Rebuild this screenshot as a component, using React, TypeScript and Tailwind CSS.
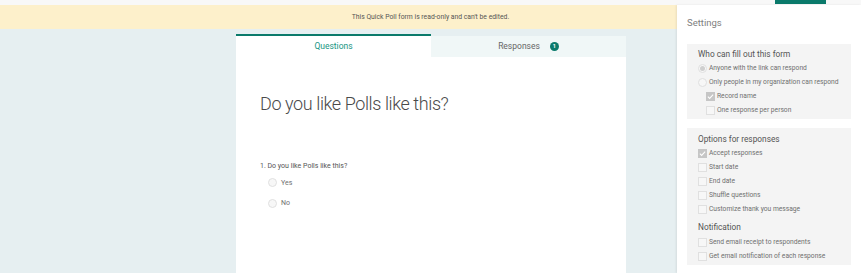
import React from "react";

const font = { fontFamily: 'Roboto, "Open Sans", sans-serif' };

function Check({ checked }: { checked?: boolean }) {
  return (
    <span
      className={
        "inline-flex h-[9px] w-[9px] shrink-0 items-center justify-center border " +
        (checked ? "border-[#c6c6c6] bg-[#c6c6c6]" : "border-[#e0e0e0] bg-[#f7f7f7]")
      }
    >
      {checked && (
        <svg width="7" height="7" viewBox="0 0 8 8">
          <path d="M1 4.2 L3 6.2 L7 1.8" fill="none" stroke="#fff" strokeWidth="1.2" />
        </svg>
      )}
    </span>
  );
}

function Radio({ checked }: { checked?: boolean }) {
  return (
    <span className="inline-flex h-[9px] w-[9px] shrink-0 items-center justify-center rounded-full border border-[#e0e0e0] bg-[#f7f7f7]">
      {checked && <span className="h-[5px] w-[5px] rounded-full bg-[#cfcfcf]" />}
    </span>
  );
}

function Row({ children, indent }: { children: React.ReactNode; indent?: boolean }) {
  return (
    <div className={"flex h-[14px] items-center gap-[2px] whitespace-nowrap text-[6.7px] text-[#707070] " + (indent ? "pl-[8px]" : "")}>
      {children}
    </div>
  );
}

export default function App() {
  return (
    <div className="flex h-[273px] w-[861px] flex-col overflow-hidden bg-white" style={font}>
      <div className="flex h-[5px] bg-[#f8f8f8]">
        <div className="w-[775px]" />
        <div className="h-[4px] w-[51px] bg-[#0b7a6b]" />
      </div>
      <div className="flex flex-1">
        <div className="flex w-[677px] flex-col bg-[#e6eff1]">
          <div className="flex h-[24px] items-center justify-center bg-[#fdf0cb] pl-[184px] text-[6.8px] text-[#555]">
            This Quick Poll form is read-only and can't be edited.
          </div>
          <div className="flex flex-1 pl-[236px] pt-[5px]">
            <div className="flex w-[390px] flex-col">
              <div className="flex h-[23px]">
                <div className="flex w-[195px] items-center justify-center border-t-2 border-[#0b7a6b] bg-white text-[8.5px] text-[#179483]">
                  Questions
                </div>
                <div className="mt-[2px] flex w-[195px] items-center justify-center gap-[10px] bg-[#f0f7f7] text-[8.5px] text-[#666]">
                  <span>Responses</span>
                  <span className="flex h-[9px] w-[9px] items-center justify-center rounded-full bg-[#0b7a6b] text-[5.5px] font-bold text-white">
                    1
                  </span>
                </div>
              </div>
              <div className="flex-1 bg-white pl-[24px]">
                <div className="pt-[35px] text-[18px] font-light leading-[24px] tracking-[-0.4px] text-[#4a4a4a]">
                  Do you like Polls like this?
                </div>
                <div className="pt-[45px] text-[7px] text-[#555]">1. Do you like Polls like this?</div>
                <div className="flex flex-col gap-[10px] pl-[8px] pt-[6px]">
                  <div className="flex items-center gap-[4px] text-[7px] text-[#707070]">
                    <Radio />
                    <span>Yes</span>
                  </div>
                  <div className="flex items-center gap-[4px] text-[7px] text-[#707070]">
                    <Radio />
                    <span>No</span>
                  </div>
                </div>
              </div>
            </div>
          </div>
        </div>
        <div className="flex flex-1 flex-col px-[10px] shadow-[-1px_0_2px_rgba(0,0,0,0.08)]">
          <div className="flex h-[25px] items-end text-[9.5px] text-[#808080]">Settings</div>
          <div className="mt-[14px] bg-[#f4f4f4] px-[11px] pb-[2px] pt-[4px]">
            <div className="flex h-[13px] items-center text-[8.3px] text-[#555]">Who can fill out this form</div>
            <Row>
              <Radio checked />
              <span>Anyone with the link can respond</span>
            </Row>
            <Row>
              <Radio />
              <span>Only people in my organization can respond</span>
            </Row>
            <Row indent>
              <Check checked />
              <span>Record name</span>
            </Row>
            <Row indent>
              <Check />
              <span>One response per person</span>
            </Row>
          </div>
          <div className="mt-[9px] bg-[#f4f4f4] px-[11px] pb-[2px] pt-[5px]">
            <div className="flex h-[13px] items-center text-[8.3px] text-[#555]">Options for responses</div>
            <Row>
              <Check checked />
              <span>Accept responses</span>
            </Row>
            <Row>
              <Check />
              <span>Start date</span>
            </Row>
            <Row>
              <Check />
              <span>End date</span>
            </Row>
            <Row>
              <Check />
              <span>Shuffle questions</span>
            </Row>
            <Row>
              <Check />
              <span>Customize thank you message</span>
            </Row>
            <div className="flex h-[19px] items-end pb-[2px] text-[8.3px] text-[#555]">Notification</div>
            <Row>
              <Check />
              <span>Send email receipt to respondents</span>
            </Row>
            <Row>
              <Check />
              <span>Get email notification of each response</span>
            </Row>
          </div>
        </div>
      </div>
    </div>
  );
}
